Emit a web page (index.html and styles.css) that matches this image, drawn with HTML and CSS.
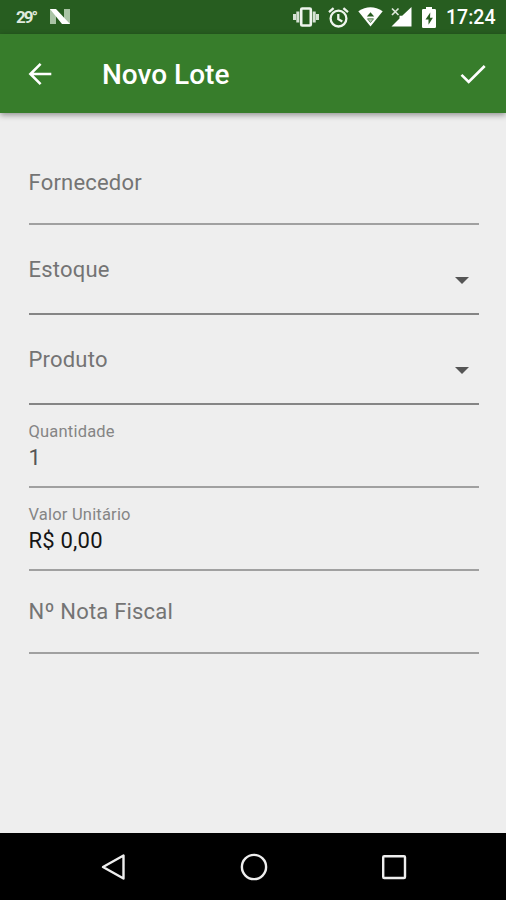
FILE: index.html
```html
<!DOCTYPE html>
<html lang="pt-BR">
<head>
  <meta charset="UTF-8" />
  <meta name="viewport" content="width=device-width, initial-scale=1" />
  <title>Novo Lote</title>
  <link rel="stylesheet" href="styles.css">
</head>
<body>
  <div class="screen">
    <!-- Barra de status -->
    <div class="status-bar">
      <span class="temp">29°</span>
      <svg class="icon-n" width="22" height="18" viewBox="0 0 22 18">
        <path d="M1 1h6v15H1zM15 1h6v15h-6z" fill="#a9c4a5"/>
        <path d="M1 1h6l14 15h-8z" fill="#fff"/>
      </svg>
      <div class="status-icons">
        <svg width="26" height="20" viewBox="0 0 26 20">
          <path d="M1.5 7v6M4.8 4.5v11M21.2 4.5v11M24.5 7v6" stroke="#d6e2d4" stroke-width="3"/>
          <rect x="8.2" y="1.5" width="9.6" height="17" rx="1" fill="none" stroke="#eff5ee" stroke-width="2.6"/>
        </svg>
        <svg width="21" height="21" viewBox="0 0 21 21" fill="none" stroke="#eff5ee" stroke-width="2.3">
          <circle cx="10.5" cy="11.6" r="7.9"/>
          <path d="M1 5.1l4.6-3.9M20 5.1l-4.6-3.9M10.3 7v5.2l4 2.3"/>
        </svg>
        <svg width="25" height="20" viewBox="0 0 25 20">
          <path d="M.3 4.2Q12.5-3.5 24.7 4.2L12.5 19.5z" fill="#fff"/>
          <path d="M8.8 9.6l3.7-4.3 3.7 4.3z" fill="#275d20"/>
          <path d="M9.5 11.8h6l-3 3.8z" fill="#b3c8b0" stroke="#5f8959" stroke-width="1"/>
        </svg>
        <svg class="signal" width="21" height="20" viewBox="0 0 21 20">
          <path d="M20.500 0v19.500H.5l8-8V8.800h2.700z" fill="#fff"/>
          <path d="M1 1.500l6.500 6.500M7.500 1.500L1 8" stroke="#dce8da" stroke-width="1.700"/>
        </svg>
        <svg class="battery" width="14" height="21" viewBox="0 0 14 21">
          <path d="M4 0h6v2h2.700q1.300 0 1.300 1.300v16.400q0 1.300-1.300 1.300H1.300Q0 21 0 19.700V3.300Q0 2 1.300 2H4z" fill="#fff"/>
          <path d="M8.300 5.500L3.500 12.500h3v5.300l4.400-7.100H8z" fill="#275d20"/>
        </svg>
      </div>
      <span class="clock">17:24</span>
    </div>

    <!-- Barra do app -->
    <div class="app-bar">
      <svg class="back" width="24" height="24" viewBox="0 0 24 24" fill="none" stroke="#fff" stroke-width="2.600">
        <path d="M23.300 12H3M12.600 1.800L2.400 12l10.200 10.200"/>
      </svg>
      <h1>Novo Lote</h1>
      <svg class="confirm" width="26" height="20" viewBox="0 0 26 20" fill="none" stroke="#fff" stroke-width="2.700">
        <path d="M1.500 10.900l7.200 7L24.700 2"/>
      </svg>
    </div>

    <form class="form">
      <div class="field supplier">
        <label>Fornecedor</label>
      </div>
      <div class="field select">
        <label>Estoque</label>
        <span class="caret"></span>
      </div>
      <div class="field select">
        <label>Produto</label>
        <span class="caret"></span>
      </div>
      <div class="field filled">
        <label>Quantidade</label>
        <span class="value muted">1</span>
      </div>
      <div class="field filled">
        <label>Valor Unitário</label>
        <span class="value">R$ 0,00</span>
      </div>
      <div class="field invoice">
        <label>Nº Nota Fiscal</label>
      </div>
    </form>

    <!-- Botões do sistema -->
    <div class="nav-bar">
      <svg width="28" height="28" viewBox="0 0 28 28"><path d="M24.500 2.500v23L4 14z"/></svg>
      <svg width="28" height="28" viewBox="0 0 28 28"><circle cx="14" cy="14" r="12.100"/></svg>
      <svg width="28" height="28" viewBox="0 0 28 28"><rect x="3.200" y="3.200" width="21.800" height="21.800" rx="1"/></svg>
    </div>
  </div>
</body>
</html>
```
FILE: styles.css
```css
* {
  box-sizing: border-box;
}

body {
  margin: 0;
  background-color: #eee;
  font-family: Roboto, "Liberation Sans", sans-serif;
}

.screen {
  display: flex;
  flex-direction: column;
  width: 506px;
  height: 900px;
  overflow: hidden;
}

svg {
  display: block;
  flex: none;
}

/* Barra de status */
.status-bar {
  display: flex;
  align-items: center;
  height: 34px;
  padding: 0 10px 0 16px;
  background-color: #275d20;
  color: #fff;
}

.temp {
  width: 33px;
  font-size: 17px;
  font-weight: 700;
  letter-spacing: -2px;
  color: #dfe9dd;
}

.status-icons {
  display: flex;
  align-items: center;
  gap: 9px;
  margin-left: auto;
}

.signal {
  margin-left: -1px;
}

.battery {
  margin-left: 1px;
}

.clock {
  width: 50px;
  margin-left: 10px;
  font-size: 19.500px;
  font-weight: 500;
  line-height: 34px;
  padding-top: 2px;
}

/* Barra do app */
.app-bar {
  display: flex;
  align-items: center;
  height: 79px;
  padding: 0 20px 0 28px;
  background-color: #377d2b;
  box-shadow: 0 2px 6px rgba(0, 0, 0, 0.4);
  color: #fff;
}

.app-bar h1 {
  margin: 1px 0 0 50px;
  font-size: 28px;
  font-weight: 500;
}

.confirm {
  margin-left: auto;
}

/* Campos */
.form {
  flex: 1;
  padding: 0 27px 0 28.500px;
}

.field {
  display: flex;
  border-bottom: 2px solid #a0a0a0;
}

.field label {
  font-size: 22px;
  line-height: 26px;
  letter-spacing: 0.200px;
  color: #747474;
}

.supplier {
  height: 112px;
  padding-top: 57px;
}

.select {
  height: 90px;
  padding-top: 32px;
  justify-content: space-between;
  border-bottom-color: #858585;
}

.caret {
  width: 0;
  height: 0;
  margin: 20px 10px 0 0;
  border: 7px solid transparent;
  border-top-color: #555;
  border-bottom: none;
}

.filled {
  flex-direction: column;
  height: 83px;
  padding-top: 16px;
}

.filled label {
  font-size: 16.500px;
  line-height: 22px;
  color: #858585;
}

.value {
  margin-top: 2px;
  font-size: 22px;
  line-height: 26px;
  letter-spacing: 0.200px;
  color: #151515;
}

.muted {
  color: #555;
}

.invoice {
  height: 83px;
  padding-top: 28px;
}

/* Botões do sistema */
.nav-bar {
  display: flex;
  align-items: center;
  gap: 112.500px;
  height: 67px;
  padding-left: 99px;
  background-color: #000;
}

.nav-bar svg {
  fill: none;
  stroke: #eee;
  stroke-width: 2.400;
  stroke-linejoin: round;
}
```
